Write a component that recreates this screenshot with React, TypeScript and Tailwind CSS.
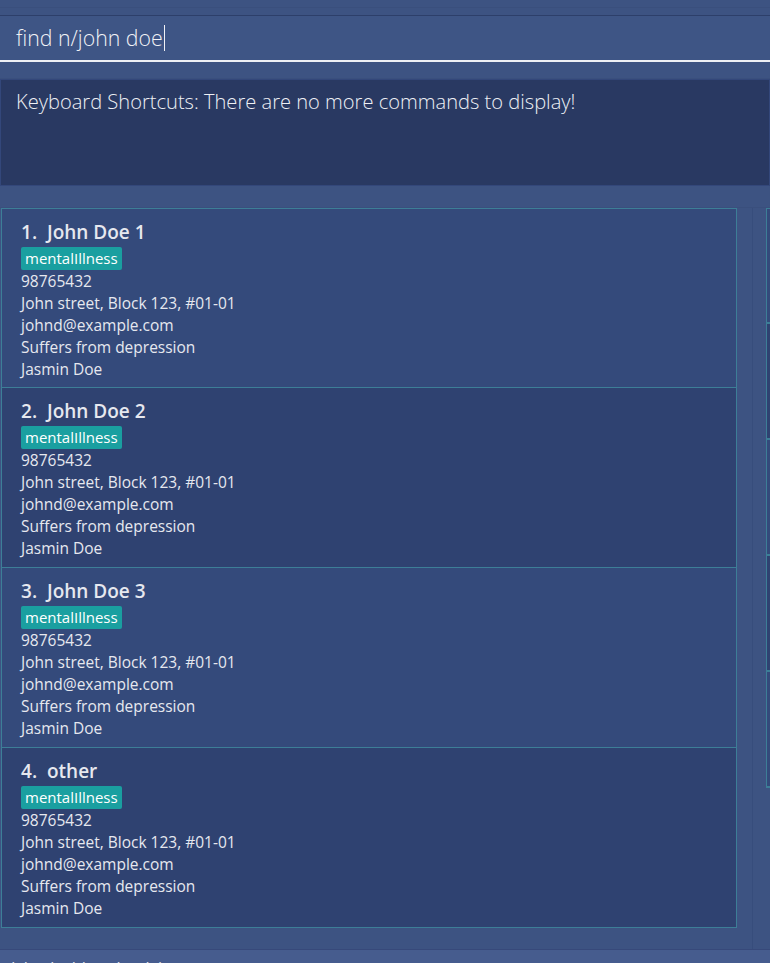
import React from "react";

type Person = {
  name: string;
  tag: string;
  phone: string;
  address: string;
  email: string;
  note: string;
  contact: string;
};

const people: Person[] = [1, 2, 3].map((n) => ({
  name: `John Doe ${n}`,
  tag: "mentalIllness",
  phone: "98765432",
  address: "John street, Block 123, #01-01",
  email: "johnd@example.com",
  note: "Suffers from depression",
  contact: "Jasmin Doe",
}));
people.push({ ...people[0], name: "other" });

const PersonCard = ({ p, index }: { p: Person; index: number }) => {
  const bg = index % 2 === 0 ? "bg-[#344a7b]" : "bg-[#2f4271]";
  return (
    <div
      className={`${bg} h-[180px] border-x border-b border-[#3d7e97] ${
        index === 0 ? "border-t" : ""
      } pl-[19px] pt-[10px] text-[#e6e8ef]`}
    >
      <div className="text-[19px] font-semibold leading-[26px] whitespace-pre">
        {index + 1}.{"  "}
        {p.name}
      </div>
      <div className="mt-[2px] h-[23px] flex">
        <span className="bg-[#1a9fa0] rounded-[2px] px-[4px] text-[15px] leading-[23px] text-white">
          {p.tag}
        </span>
      </div>
      <div className="text-[15.5px] leading-[22px]">
        <div>{p.phone}</div>
        <div>{p.address}</div>
        <div>{p.email}</div>
        <div>{p.note}</div>
        <div>{p.contact}</div>
      </div>
    </div>
  );
};

export default function App() {
  return (
    <div
      className="w-[770px] h-[963px] overflow-hidden bg-[#3d5382] flex flex-col"
      style={{ fontFamily: '"Open Sans", "Noto Sans", sans-serif' }}
    >
      {/* top strip */}
      <div className="h-[8px] border-b border-[#3a4f7d] shrink-0" />
      <div className="h-[8px] border-b border-[#2d3f6a] shrink-0" />

      {/* command box */}
      <div className="h-[46px] shrink-0 bg-[#3e5585] border-b-2 border-[#eef0f5] flex items-center pl-[16px]">
        <span className="text-[21.3px] font-light text-[#f1f2f6] leading-none">find n/john doe</span>
        <span className="w-px h-[26px] bg-[#f1f2f6] ml-px" />
      </div>

      <div className="h-[17px] shrink-0 border-b border-[#3a4f7d]" />

      {/* result display */}
      <div className="h-[107px] shrink-0 bg-[#293962] border border-[#33477a] pl-[15px] pt-[8px]">
        <div className="text-[20.1px] font-light text-[#eef0f5] leading-[28px]">
          Keyboard Shortcuts: There are no more commands to display!
        </div>
      </div>

      <div className="h-[22px] shrink-0 border-b border-[#3a4f7d]" />

      {/* lists */}
      <div className="flex h-[741px] shrink-0">
        <div className="w-[752px] pl-[1px] pr-[15px] flex flex-col">
          {people.map((p, i) => (
            <PersonCard key={i} p={p} index={i} />
          ))}
        </div>
        <div className="w-px bg-[#374d7c]" />
        <div className="flex-1 pl-[13px]">
          {[0, 1, 2, 3, 4].map((i) => (
            <div
              key={i}
              className={`h-[116px] border-l border-b-2 border-[#3d7e97] ${
                i === 0 ? "border-t" : ""
              } ${i % 2 === 0 ? "bg-[#344a7b]" : "bg-[#2f4271]"}`}
            />
          ))}
        </div>
      </div>

      {/* status bar */}
      <div className="flex-1 border-t border-[#37497a] bg-[#465c8e] pl-[8px] pt-[8px]">
        <div className="text-[16px] text-[#e6e8ef] leading-[20px]">.\data\addressbook.json</div>
      </div>
    </div>
  );
}
